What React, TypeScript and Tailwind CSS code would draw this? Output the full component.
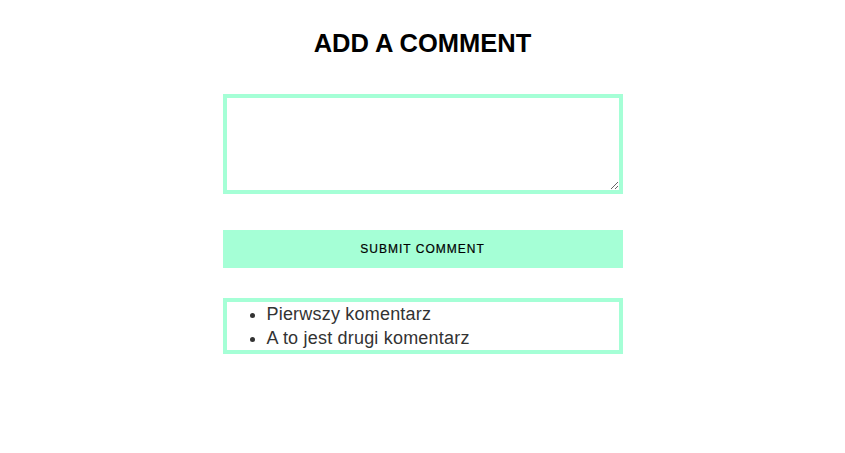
export default function App() {
  const comments = ["Pierwszy komentarz", "A to jest drugi komentarz"];

  return (
    <div className="min-h-[453px] bg-white font-['Liberation_Sans',Arial,sans-serif]">
      <div className="mx-auto flex w-[400px] flex-col pt-[28px]">
        <h1 className="text-center text-[25.5px] font-bold leading-[30px] text-black">
          ADD A COMMENT
        </h1>
        <textarea className="mt-[36px] block h-[100px] w-full border-4 border-[#a5ffd6] bg-white p-1 outline-none" />
        <button className="mt-[36px] h-[38px] w-full bg-[#a5ffd6] text-[12px] tracking-[1px] text-black [-webkit-text-stroke:0.2px_black]">
          SUBMIT COMMENT
        </button>
        <ul className="mt-[30px] list-disc border-4 border-[#a5ffd6] pl-10 text-[18px] leading-[24px] tracking-[0.2px] text-[#333]">
          {comments.map((c) => (
            <li key={c}>{c}</li>
          ))}
        </ul>
      </div>
    </div>
  );
}
